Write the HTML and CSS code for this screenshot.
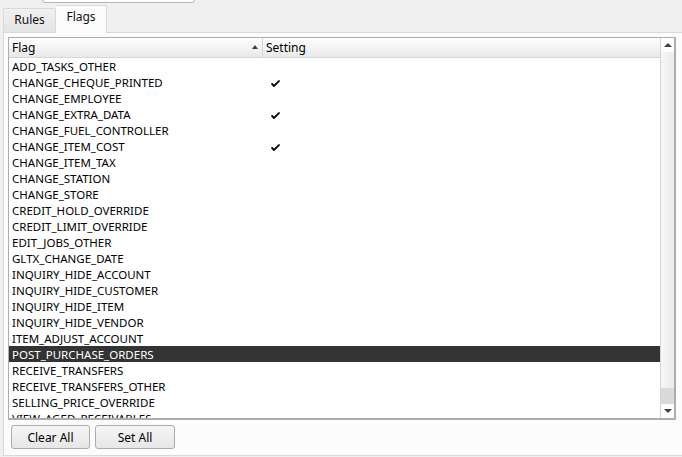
FILE: index.html
```html
<!DOCTYPE html>
<html>
<head>
<meta charset="utf-8">
<link rel="stylesheet" href="styles.css">
</head>
<body>
<div class="search"></div>
<div class="tabs">
  <div class="tab">Rules</div>
  <div class="tab active">Flags</div>
</div>
<div class="pane">
  <div class="grid">
    <div class="list">
      <div class="head">
        <div class="hcell flag">Flag<span class="sort"></span></div>
        <div class="hcell setting">Setting</div>
      </div>
      <div class="rows">
        <div class="row"><span class="name">ADD_TASKS_OTHER</span><span class="val"></span></div>
        <div class="row"><span class="name">CHANGE_CHEQUE_PRINTED</span><span class="val"><svg class="tick" width="9" height="7" viewBox="0 0 9 7"><path d="M0.5 3.5 L3 6 L8.5 0.5" fill="none" stroke="#000" stroke-width="1.8"/></svg></span></div>
        <div class="row"><span class="name">CHANGE_EMPLOYEE</span><span class="val"></span></div>
        <div class="row"><span class="name">CHANGE_EXTRA_DATA</span><span class="val"><svg class="tick" width="9" height="7" viewBox="0 0 9 7"><path d="M0.5 3.5 L3 6 L8.5 0.5" fill="none" stroke="#000" stroke-width="1.8"/></svg></span></div>
        <div class="row"><span class="name">CHANGE_FUEL_CONTROLLER</span><span class="val"></span></div>
        <div class="row"><span class="name">CHANGE_ITEM_COST</span><span class="val"><svg class="tick" width="9" height="7" viewBox="0 0 9 7"><path d="M0.5 3.5 L3 6 L8.5 0.5" fill="none" stroke="#000" stroke-width="1.8"/></svg></span></div>
        <div class="row"><span class="name">CHANGE_ITEM_TAX</span><span class="val"></span></div>
        <div class="row"><span class="name">CHANGE_STATION</span><span class="val"></span></div>
        <div class="row"><span class="name">CHANGE_STORE</span><span class="val"></span></div>
        <div class="row"><span class="name">CREDIT_HOLD_OVERRIDE</span><span class="val"></span></div>
        <div class="row"><span class="name">CREDIT_LIMIT_OVERRIDE</span><span class="val"></span></div>
        <div class="row"><span class="name">EDIT_JOBS_OTHER</span><span class="val"></span></div>
        <div class="row"><span class="name">GLTX_CHANGE_DATE</span><span class="val"></span></div>
        <div class="row"><span class="name">INQUIRY_HIDE_ACCOUNT</span><span class="val"></span></div>
        <div class="row"><span class="name">INQUIRY_HIDE_CUSTOMER</span><span class="val"></span></div>
        <div class="row"><span class="name">INQUIRY_HIDE_ITEM</span><span class="val"></span></div>
        <div class="row"><span class="name">INQUIRY_HIDE_VENDOR</span><span class="val"></span></div>
        <div class="row"><span class="name">ITEM_ADJUST_ACCOUNT</span><span class="val"></span></div>
        <div class="row selected"><span class="name">POST_PURCHASE_ORDERS</span><span class="val"></span></div>
        <div class="row"><span class="name">RECEIVE_TRANSFERS</span><span class="val"></span></div>
        <div class="row"><span class="name">RECEIVE_TRANSFERS_OTHER</span><span class="val"></span></div>
        <div class="row"><span class="name">SELLING_PRICE_OVERRIDE</span><span class="val"></span></div>
        <div class="row"><span class="name">VIEW_AGED_RECEIVABLES</span><span class="val"></span></div>
      </div>
    </div>
    <div class="vscroll">
      <div class="sbtn up"><span class="arr-up"></span></div>
      <div class="track"><div class="thumb"></div></div>
      <div class="sbtn down"><span class="arr-down"></span></div>
    </div>
  </div>
  <div class="buttons">
    <button class="btn clear">Clear All</button>
    <button class="btn set">Set All</button>
  </div>
</div>
</body>
</html>
```

FILE: styles.css
```css
html, body {
  margin: 0;
  height: 100%;
  overflow: hidden;
}
body {
  background: #f0f0f0;
  font-family: "Noto Sans", "DejaVu Sans", sans-serif;
  font-size: 12px;
  color: #000;
}

/* text box above the tabs, mostly scrolled out of view */
.search {
  margin: -20px 0 0 42px;
  width: 151px;
  height: 21px;
  border: 1px solid #b4b4b4;
  border-radius: 3px;
  background: #fff;
}

/* tab strip */
.tabs {
  display: flex;
  align-items: flex-end;
  height: 29px;
  padding-left: 3px;
  position: relative;
  z-index: 1;
}
.tab {
  box-sizing: border-box;
  height: 24px;
  width: 53px;
  border: 1px solid #d9d9d9;
  border-bottom: none;
  border-radius: 2px 2px 0 0;
  background: linear-gradient(#f0f0f0, #e5e5e5);
  text-align: center;
  line-height: 22px;
  color: #111;
}
.tab.active {
  height: 28px;
  width: 51px;
  margin-bottom: -1px;
  background: #fcfcfc;
  border-left: none;
  padding-bottom: 4px;
  line-height: 22px;
}

/* tab page */
.pane {
  box-sizing: border-box;
  margin: 0 -3px 0 3px;
  height: 424px;
  border: 1px solid #d9d9d9;
  background: #fcfcfc;
  padding: 4px 0 0 4px;
}

.grid {
  display: flex;
  width: 668px;
  height: 383px;
  box-sizing: border-box;
  border: 1px solid #adadad;
  border-right-width: 2px;
  border-bottom-width: 2px;
  background: #fff;
}

.list {
  flex: 1;
  overflow: hidden;
}
.head {
  display: flex;
  height: 19px;
  border-bottom: 1px solid #d5d5d5;
  background: linear-gradient(#ffffff, #f1f1f1 60%, #e9e9e9);
}
.hcell {
  box-sizing: border-box;
  line-height: 20px;
  padding-left: 3px;
  position: relative;
}
.hcell.flag {
  width: 254px;
  border-right: 1px solid #d5d5d5;
}
.hcell.setting {
  flex: 1;
}
.sort {
  position: absolute;
  right: 4px;
  top: 7px;
  width: 0;
  height: 0;
  border-left: 3.5px solid transparent;
  border-right: 3.5px solid transparent;
  border-bottom: 4px solid #3c3c3c;
}

.row {
  display: flex;
  height: 16px;
  line-height: 18px;
  font-size: 11.5px;
  white-space: nowrap;
}
.row .name {
  width: 254px;
  padding-left: 3px;
  box-sizing: border-box;
}
.row .val {
  display: flex;
  align-items: center;
  padding: 2px 0 0 8px;
}
.row.selected {
  background: #333333;
  color: #fff;
}

/* vertical scroll bar */
.vscroll {
  width: 13px;
  border-left: 1px solid #d5d5d5;
  display: flex;
  flex-direction: column;
  background: #f4f4f4;
}
.sbtn {
  height: 14px;
  display: flex;
  align-items: center;
  justify-content: center;
  background: #fdfdfd;
}
.track {
  flex: 1;
  display: flex;
  flex-direction: column;
  background: linear-gradient(90deg, #f6f6f6, #ececec);
}
.thumb {
  margin-top: auto;
  height: 16px;
  background: #dadada;
}
.arr-up, .arr-down {
  width: 0;
  height: 0;
  border-left: 4px solid transparent;
  border-right: 4px solid transparent;
}
.arr-up { border-bottom: 4px solid #404040; }
.arr-down { border-top: 4px solid #404040; }

/* action buttons */
.buttons {
  display: flex;
  gap: 5px;
  padding: 5px 0 0 3px;
}
.btn {
  box-sizing: border-box;
  height: 24px;
  width: 79px;
  border: 1px solid #acacac;
  border-radius: 3px;
  background: linear-gradient(#f6f6f6, #e6e6e6);
  font-family: inherit;
  font-size: 12px;
  color: #000;
  padding: 0;
}
.btn.set { width: 80px; }
```
